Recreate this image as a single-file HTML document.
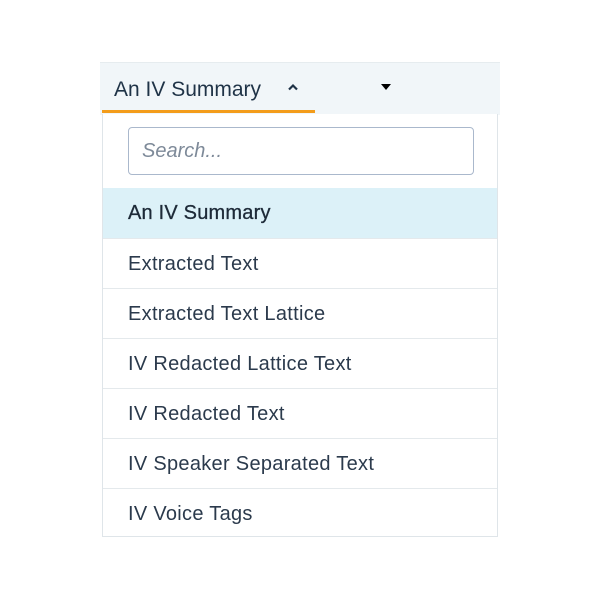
<!DOCTYPE html>
<html><head><style>
body{margin:0;width:600px;height:600px;background:#fff;font-family:"Liberation Sans",sans-serif;position:relative;overflow:hidden}
.hdr{position:absolute;left:100px;top:62px;width:400px;height:52px;background:#f1f6f9;border-top:1px solid #e6ecef}
.tab{position:absolute;left:14px;top:15px;font-size:21px;color:#1f3347}
.ul{position:absolute;left:102px;top:110px;width:213px;height:3px;background:#f39c1a}
.car{position:absolute;left:287px;top:83px}
.tri{position:absolute;left:381px;top:84px;width:0;height:0;border-left:5px solid transparent;border-right:5px solid transparent;border-top:6px solid #000}
.dd{position:absolute;left:102px;top:114px;width:394px;height:422px;background:#fff;border:1px solid #dfe5e9;border-top:none}
.srch{position:absolute;left:25px;top:13px;border:1px solid #aab8cc;border-radius:4px;font-style:italic;color:#7e8a99;font-size:20px;line-height:46px;padding-left:13px;box-sizing:border-box;width:346px;height:48px}
.it{position:absolute;left:0;width:394px;height:50px;border-top:1px solid #e4e9ec;box-sizing:border-box;font-size:20px;letter-spacing:0.3px;color:#2b3a4c;line-height:51px;padding-left:25px}
.sel{background:#dcf1f8;border-top:none;color:#1d2a38;font-size:20px;letter-spacing:0.2px;-webkit-text-stroke:0.3px #1d2a38}
</style></head><body>
<div class="hdr"><div class="tab">An IV Summary</div></div>
<svg class="car" width="12" height="8" viewBox="0 0 12 8"><path d="M2 6.5L6 2.5L10 6.5" fill="none" stroke="#1f3347" stroke-width="2.2"/></svg>
<div class="tri"></div>
<div class="ul"></div>
<div class="dd">
<div class="srch">Search...</div>
<div class="it sel" style="top:74px">An IV Summary</div>
<div class="it" style="top:124px">Extracted Text</div>
<div class="it" style="top:174px">Extracted Text Lattice</div>
<div class="it" style="top:224px">IV Redacted Lattice Text</div>
<div class="it" style="top:274px">IV Redacted Text</div>
<div class="it" style="top:324px">IV Speaker Separated Text</div>
<div class="it" style="top:374px">IV Voice Tags</div>
</div>
</body></html>
